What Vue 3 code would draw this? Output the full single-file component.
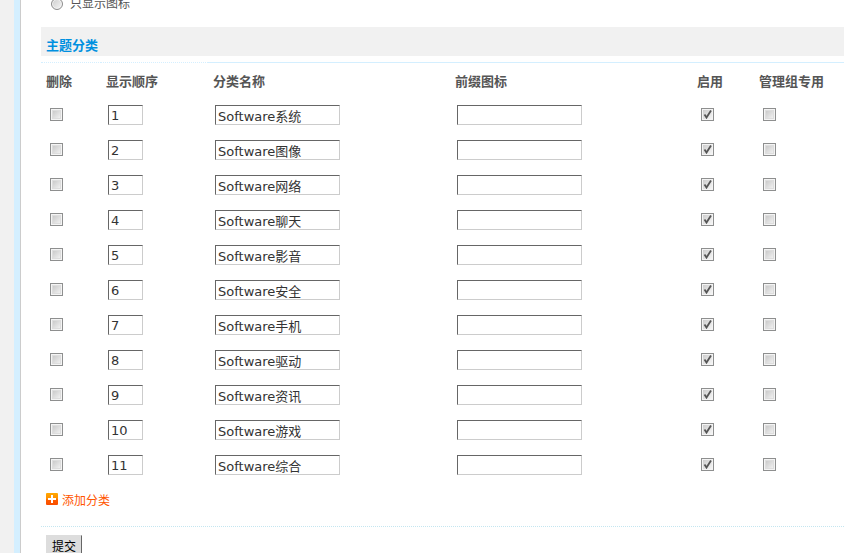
<template>
  <div class="page">
    <div class="gutter"></div>
    <form class="content" @submit.prevent>
      <label class="radio-row">
        <input type="radio" name="display" value="icon">
        <span>只显示图标</span>
      </label>

      <h2 class="title">主题分类</h2>

      <table>
        <colgroup>
          <col class="col-delete">
          <col class="col-order">
          <col class="col-text">
          <col class="col-text">
          <col class="col-enable">
          <col>
        </colgroup>
        <thead>
          <tr>
            <th class="dotted">删除</th>
            <th class="dotted">显示顺序</th>
            <th>分类名称</th>
            <th>前缀图标</th>
            <th>启用</th>
            <th>管理组专用</th>
          </tr>
        </thead>
        <tbody>
          <tr v-for="row in rows" :key="row.id">
            <td><input v-model="row.remove" type="checkbox" aria-label="删除"></td>
            <td><input v-model="row.order" type="text" class="short" aria-label="显示顺序"></td>
            <td><input v-model="row.name" type="text" aria-label="分类名称"></td>
            <td><input v-model="row.icon" type="text" aria-label="前缀图标"></td>
            <td><input v-model="row.enabled" type="checkbox" aria-label="启用"></td>
            <td><input v-model="row.adminOnly" type="checkbox" aria-label="管理组专用"></td>
          </tr>
        </tbody>
      </table>

      <div class="add-row">
        <a href="#" @click.prevent="addRow">
          <svg width="12" height="12" viewBox="0 0 12 12" aria-hidden="true">
            <defs>
              <linearGradient id="add-bg" x1="0" y1="0" x2="0" y2="1">
                <stop offset="0" stop-color="#ffa800" />
                <stop offset="0.45" stop-color="#ff9000" />
                <stop offset="0.6" stop-color="#ff5a00" />
                <stop offset="1" stop-color="#f84e00" />
              </linearGradient>
            </defs>
            <rect width="12" height="12" rx="1" fill="url(#add-bg)" />
            <path d="M5 2h2v3h3v2H7v3H5V7H2V5h3z" fill="#fff" />
          </svg>
          <span>添加分类</span>
        </a>
      </div>

      <div class="actions">
        <button type="submit">提交</button>
      </div>
    </form>
  </div>
</template>

<script setup>
import { ref } from 'vue'

const names = ['系统', '图像', '网络', '聊天', '影音', '安全', '手机', '驱动', '资讯', '游戏', '综合']

const makeRow = (id, name) => ({
  id,
  order: String(id),
  name,
  icon: '',
  remove: false,
  enabled: true,
  adminOnly: false
})

const rows = ref(names.map((name, i) => makeRow(i + 1, 'Software' + name)))

const addRow = () => {
  rows.value.push(makeRow(rows.value.length + 1, ''))
}
</script>

<style>
body {
  margin: 0;
  overflow: hidden;
}
</style>

<style scoped>
.page {
  display: flex;
  min-height: 100vh;
  background: #fff;
  color: #555;
  font: 12px/18px "DejaVu Sans", "Noto Sans CJK SC", sans-serif;
}

.gutter {
  flex: none;
  width: 14px;
  background: #f1f1f1;
  border-right: 6px solid #d4efff;
}

.content {
  flex: 1;
  min-width: 0;
  padding-left: 20px;
  border-left: 1px solid #ccc;
}

/* Last option of the list above, partly scrolled away */
.radio-row {
  display: flex;
  align-items: center;
  gap: 7px;
  margin-top: -5px;
  padding-left: 10px;
  height: 17px;
}

input[type="radio"] {
  appearance: none;
  box-sizing: border-box;
  width: 12px;
  height: 12px;
  margin: 0;
  border: 1px solid #8c8c8c;
  border-radius: 50%;
  background: linear-gradient(135deg, #ccc, #f6f6f6);
  box-shadow: inset 0 0 0 1px #f4f4f4;
}

input[type="radio"]:checked {
  background: radial-gradient(#444 35%, #eee 40%);
}

.title {
  margin: 15px 0 6px;
  padding: 10px 5px 1px;
  background: #f1f1f1;
  color: #0090e0;
  font-size: 13px;
  font-weight: bold;
  line-height: 18px;
}

table {
  width: 100%;
  table-layout: fixed;
  border-collapse: separate;
  border-spacing: 0;
}

.col-delete {
  width: 60px;
}

.col-order {
  width: 107px;
}

.col-text {
  width: 242px;
}

.col-enable {
  width: 62px;
}

th {
  height: 31px;
  padding: 3px 0 0 5px;
  border-top: 1px solid #d4efff;
  font-size: 13px;
  text-align: left;
  white-space: nowrap;
}

th.dotted {
  border-top-style: dotted;
}

td {
  height: 35px;
  padding: 0 0 0 7px;
  line-height: 0;
}

td:first-child,
td:nth-child(n + 5) {
  padding-left: 9px;
}

input[type="text"] {
  box-sizing: border-box;
  width: 125px;
  height: 20px;
  margin: 0;
  padding: 1px 2px 0;
  border: 1px solid;
  border-color: #666 #ccc #ccc #666;
  border-radius: 0;
  background: #fff;
  color: #333;
  font: 13px/17px "DejaVu Sans", "Noto Sans CJK SC", sans-serif;
  vertical-align: middle;
}

input.short {
  width: 35px;
}

input[type="checkbox"] {
  appearance: none;
  box-sizing: border-box;
  width: 13px;
  height: 13px;
  margin: 0;
  border: 1px solid #8e8f8f;
  background: linear-gradient(135deg, #c0c0c0, #fafafa);
  box-shadow: inset 0 0 0 1px #f4f4f4, inset 0 0 0 2px #ddd;
  vertical-align: middle;
}

input[type="checkbox"]:checked {
  background: url("data:image/svg+xml,%3Csvg xmlns='http://www.w3.org/2000/svg' viewBox='0 0 11 11'%3E%3Cpath d='M2.5 5.5L4.5 8.5L9 1.5' fill='none' stroke='%23555' stroke-width='1.8'/%3E%3C/svg%3E"), linear-gradient(135deg, #c8c8c8, #fafafa);
  box-shadow: inset 0 0 0 1px #f4f4f4;
}

.add-row {
  padding: 9px 5px 16px;
}

.add-row a {
  display: flex;
  align-items: flex-start;
  gap: 4px;
  width: fit-content;
  color: #f50;
  text-decoration: none;
}

.add-row svg {
  margin-top: 2px;
}

.add-row span {
  padding-top: 1px;
}

.actions {
  padding: 8px 5px;
  border-top: 1px dotted #c4e6f0;
}

button {
  display: block;
  height: 23px;
  padding: 1px 5px 0;
  border: 1px solid;
  border-color: #ddd #666 #666 #ddd;
  border-radius: 0;
  background: #ddd;
  color: #000;
  font: 12px/20px "DejaVu Sans", "Noto Sans CJK SC", sans-serif;
}
</style>
